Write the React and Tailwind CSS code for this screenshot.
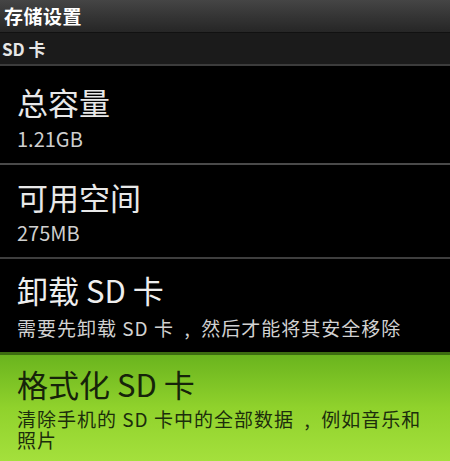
const cjk = { fontFamily: '"Noto Sans CJK SC", "Noto Sans", sans-serif' };

// Android list puts wide gaps around the comma
const SEP = '\u2002,\u2002';

function Item({ title, sub, pt, mt }) {
  return (
    <div className={`flex flex-col px-[17px] ${pt}`}>
      <div className="text-[31px] leading-[36px] text-[#e8e8e8]">{title}</div>
      <div className={`text-[20px] leading-[24px] text-[#cfcfcf] ${mt}`}>{sub}</div>
    </div>
  );
}

export default function App() {
  return (
    <div className="w-[450px] h-[461px] bg-black overflow-hidden flex flex-col" style={cjk}>
      {/* title bar */}
      <div className="h-[33px] shrink-0 bg-gradient-to-b from-[#454545] to-[#262626] flex items-center px-[4px] border-b border-[#111]">
        <span className="text-[19px] font-bold text-white tracking-[0.5px]">存储设置</span>
      </div>
      {/* section header */}
      <div className="h-[33px] shrink-0 bg-[#1b1b1b] flex items-center px-[2px] border-b-2 border-[#3c3c3c]">
        <span className="text-[17px] font-bold text-[#e6e6e6]">SD 卡</span>
      </div>

      <div className="h-[97px] shrink-0">
        <Item title="总容量" sub="1.21GB" pt="pt-[18px]" mt="mt-[7px]" />
      </div>
      <div className="h-[2px] shrink-0 bg-[#4a4a4a]" />
      <div className="h-[92px] shrink-0">
        <Item title="可用空间" sub="275MB" pt="pt-[14px]" mt="mt-[6px]" />
      </div>
      <div className="h-[2px] shrink-0 bg-[#3e3e3e]" />

      <div className="h-[93px] shrink-0 flex flex-col px-[17px] pt-[13px]">
        <div className="text-[31px] leading-[36px] text-[#eeeeee]">卸载 SD 卡</div>
        <div className="text-[19px] tracking-[1px] leading-[24px] mt-[8px] text-[#d2d2d2] whitespace-nowrap">
          {`需要先卸载 SD 卡${SEP}然后才能将其安全移除`}
        </div>
      </div>

      {/* selected row */}
      <div className="flex-1 bg-gradient-to-b from-[#6ab41e] via-[#90d22c] to-[#a4e03c] flex flex-col pl-[17px] pr-[26px] pt-[11px] border-t-[3px] border-[#3c6c10]">
        <div className="text-[31px] leading-[36px] text-[#16230a]">格式化 SD 卡</div>
        <div className="text-[19px] tracking-[1px] leading-[21px] mt-[6px] text-[#1c2e0c]">
          {`清除手机的 SD 卡中的全部数据${SEP}例如音乐和照片`}
        </div>
      </div>
    </div>
  );
}
